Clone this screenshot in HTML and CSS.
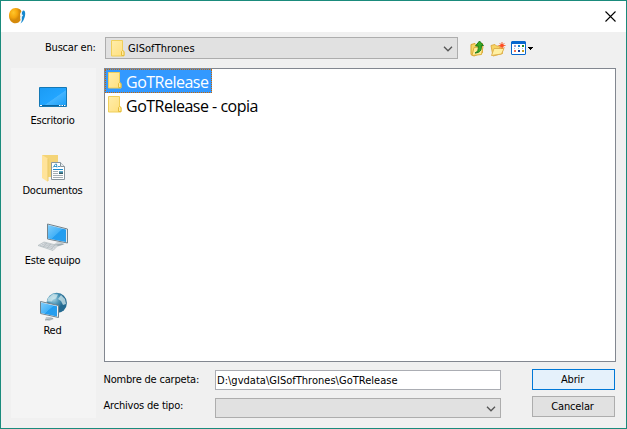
FILE: index.html
```html
<!DOCTYPE html>
<html lang="es">
<head>
<meta charset="utf-8">
<title>Abrir</title>
<link rel="stylesheet" href="styles.css">
</head>
<body>
<svg class="defs" width="0" height="0" aria-hidden="true">
  <defs>
    <linearGradient id="fold" x2="1" y2="1"><stop stop-color="#ffedaa"/><stop offset="1" stop-color="#ffdf7d"/></linearGradient>
    <linearGradient id="blue" x2="1" y2="1"><stop stop-color="#1b9bf4"/><stop offset=".55" stop-color="#22a5ff"/><stop offset=".57" stop-color="#43b4ff"/><stop offset="1" stop-color="#159cf7"/></linearGradient>
    <linearGradient id="screen" x2="1" y2="1"><stop stop-color="#80cdfb"/><stop offset=".5" stop-color="#43b1f7"/><stop offset=".52" stop-color="#229df0"/><stop offset="1" stop-color="#299eed"/></linearGradient>
    <radialGradient id="sun" cx=".35" cy=".3"><stop stop-color="#ffc62b"/><stop offset=".65" stop-color="#f5a60d"/><stop offset="1" stop-color="#d58a0b"/></radialGradient>
    <radialGradient id="globe" cx=".35" cy=".3"><stop stop-color="#a9d4e4"/><stop offset=".55" stop-color="#4e97b8"/><stop offset="1" stop-color="#246a91"/></radialGradient>
    <symbol id="folder" viewBox="0 0 14 18">
      <path d="M.5 1.5h11v10l1.5 1v4.5H.5z" fill="url(#fold)" stroke="#efcf5b"/>
      <path d="M10.5 16.5v-4l1-1 1.5 1v4z" fill="#ffe99d" stroke="#e6be3c"/>
    </symbol>
  </defs>
</svg>
<div class="window">
  <header class="titlebar">
    <svg class="logo" width="17" height="17" viewBox="0 0 17 17">
      <path d="M6.5 0C9.500 0 12 1.500 12.500 3.500 11 5 10.800 7 11.500 8.500c-.5 1-.3 2.500.2 3.500-1.200 2-3 3.300-5.200 3.300C2.800 15.300 0 12 0 7.700 0 3.300 2.800 0 6.500 0z" fill="url(#sun)"/>
      <path d="M14 2.500c1.800-.2 2.300 1.500 2.200 3.500-.2 4-2.200 8-4.700 9.500 1.200-2 1.600-3.500 1.200-5 0-1.300.4-2.300 1.300-3-1.500-1-1.500-4 0-5z" fill="#1688ce"/>
      <path d="M13 3.500c-1 1.200-.8 2.700 0 4-1 .9-1.300 2.200-1 3.700" fill="none" stroke="#d8eef8"/>
    </svg>
    <svg class="close" width="11" height="11" viewBox="0 0 11 11"><path d="M.5.5l10 10M10.500.5l-10 10" stroke="#000" stroke-width="1.100"/></svg>
  </header>
  <div class="toolbar">
    <span class="label look">Buscar en:</span>
    <div class="combo location">
      <svg width="14" height="18"><use href="#folder"/></svg>
      <span class="place">GISofThrones</span>
      <svg class="chevron" width="10" height="6" viewBox="0 0 10 6"><path d="M1 .8l4 4 4-4" fill="none" stroke="#555" stroke-width="1.300"/></svg>
    </div>
    <svg class="up" width="15" height="17" viewBox="0 0 15 17">
      <path d="M1 4.500l4-1 1 1 6.500-1v9L4 16 1 14.500z" fill="#f6d565" stroke="#d7a32d"/>
      <path d="M2 15.500l2-8 9-1-1.500 8z" fill="#ffeb96" stroke="#dcae3e"/>
      <path d="M5 13c3-1 3.500-3.500 3.200-7H5.500L9.500 1l4 4.500h-2.200C12 10 10 12.800 5 13z" fill="#36ab24" stroke="#16741a" stroke-width=".9"/>
    </svg>
    <svg class="new" width="16" height="15" viewBox="0 0 16 15">
      <path d="M1 3.500l4-1 1.500 1.500 6 .5v7L3 14z" fill="#f7d363" stroke="#dfae45"/>
      <path d="M1.500 13.500L4 6.500h10L11.500 12z" fill="#fff0a2" stroke="#dfb250"/>
      <path d="M12 0v7M8.500 3.500h7M9.700 1.200l4.600 4.600M14.300 1.200L9.700 5.800" stroke="#f46d3c" stroke-width="1"/>
      <circle cx="12" cy="3.500" r="1.700" fill="#ff4b24"/>
    </svg>
    <svg class="view" width="23" height="14" viewBox="0 0 23 14">
      <path d="M1 0h13l1 1v12l-1 1H1l-1-1V1z" fill="#0867ce"/><path d="M1 3h13v10H1z" fill="#fff"/>
      <path d="M3 4h2v2H3z" fill="#a69cca"/><path d="M7 4h2v2H7z" fill="#1982d2"/><path d="M11 4h2v2h-2z" fill="#218b28"/>
      <path d="M3 9h2v2H3z" fill="#f3704e"/><path d="M7 9h2v2H7z" fill="#153c9d"/><path d="M11 9h2v2h-2z" fill="#c49b22"/>
      <path d="M3 7.500h1M7 7.500h1M11 7.500h1" stroke="#a7c0dc"/>
      <path d="M17 6h5v1h-1v1h-1v1h-1V8h-1V7h-1z" fill="#000"/>
    </svg>
  </div>
  <div class="content">
    <nav class="places">
      <div class="shortcut">
        <svg width="34" height="34" viewBox="0 0 34 34">
          <path d="M3.500 7.500h27v19h-27z" fill="url(#blue)" stroke="#1478b5"/>
          <path d="M4 25.500h26" stroke="#0b639d"/><path d="M4 25.500h2M23 25.500h1.500M25.500 25.500h1.500M28 25.500h1.500" stroke="#fff"/>
        </svg>
        <span>Escritorio</span>
      </div>
      <div class="shortcut">
        <svg width="34" height="34" viewBox="0 0 34 34">
          <path d="M6 5h16v22H9z" fill="#f4d477"/>
          <path d="M6 5l6 3.500V32l-6-4z" fill="#ffe39a"/><path d="M12 8.500V31" stroke="#e9c966"/>
          <path d="M15.500 12.500h9l4 4v13h-13z" fill="#fff" stroke="#8a979e"/><path d="M24.500 12.500v4h4" fill="#e5eaed" stroke="#87939a"/>
          <path d="M17 17.500l2.500-3.500h1l.5 3.500M18 16.500h3M22 16.500h2" fill="none" stroke="#1884be" stroke-width=".8"/>
          <path d="M17 19.500h10" stroke="#1b8cd0"/>
          <path d="M17 21.500h5M17 23.500h5M17 25.500h10M17 27.500h10" stroke="#a6afb4"/><path d="M23 21h4v3h-4z" fill="#5eaccf"/><path d="M23 22.500h4V24h-4z" fill="#315b64"/>
        </svg>
        <span>Documentos</span>
      </div>
      <div class="shortcut">
        <svg width="34" height="34" viewBox="0 0 34 34">
          <path d="M17 25l4-3h4l4 2-7 2.500z" fill="#cbd2d6"/><path d="M18 25l8-1.500 2 1-6 1.500z" fill="#9eabb1"/>
          <path d="M11.500 4l20 5v14l-20-4z" fill="#e5e9ec" stroke="#73838c"/>
          <path d="M12 5l18 4.500v12.500l-18-3.600z" fill="url(#screen)"/>
          <path d="M2 25.500L8 22l14 3.500-5 5z" fill="#d9dee1" stroke="#a8b1b6" stroke-width=".6"/>
          <path d="M4 25.500l13 3M6 24.300l13 3M8 23.200l12 2.800M7 27l4-4M11 28l4-4M15 29l4-4" stroke="#aab3b9" stroke-width=".5"/>
        </svg>
        <span>Este equipo</span>
      </div>
      <div class="shortcut">
        <svg width="34" height="34" viewBox="0 0 34 34">
          <circle cx="20.700" cy="13" r="10.200" fill="url(#globe)"/>
          <path d="M12 8l5-4 5 .5-2 4-3 1-1 2-5 0zM25 5l4 4 1 5-3 1-2-4-3-2z" fill="#d3e9ee" opacity=".75"/>
          <path d="M10 27h5l3 2-5 2-4-1z" fill="#c0c9ce"/><path d="M9 30l8-1.500" stroke="#98a4aa"/>
          <path d="M4.500 11.500l18 4v12l-18-4z" fill="#edf2f4" stroke="#71828d"/>
          <path d="M5 12.500l16 3.700v10.300L5 23z" fill="url(#screen)"/>
        </svg>
        <span>Red</span>
      </div>
    </nav>
    <main class="files">
      <div class="file selected"><svg width="14" height="18"><use href="#folder"/></svg><span>GoTRelease</span></div>
      <div class="file"><svg width="14" height="18"><use href="#folder"/></svg><span>GoTRelease - copia</span></div>
    </main>
    <div class="form">
      <div class="fields">
        <span class="label">Nombre de carpeta:</span>
        <div class="field">D:\gvdata\GISofThrones\GoTRelease</div>
        <span class="label">Archivos de tipo:</span>
        <div class="combo"><svg class="chevron" width="10" height="6" viewBox="0 0 10 6"><path d="M1 .8l4 4 4-4" fill="none" stroke="#555" stroke-width="1.300"/></svg></div>
      </div>
      <div class="actions">
        <button class="primary">Abrir</button>
        <button>Cancelar</button>
      </div>
    </div>
  </div>
</div>
</body>
</html>
```

FILE: styles.css
```css
* { box-sizing: border-box; }
body { margin: 0; font: 11px/14px "DejaVu Sans Condensed", "DejaVu Sans", sans-serif; font-stretch: condensed; color: #000; }
svg { display: block; flex: none; }
.defs { position: absolute; }
.window { width: 627px; height: 429px; border: 1px solid #1a8b7c; background: #f0f0f0; }
.titlebar { height: 31px; background: #fff; display: flex; justify-content: space-between; padding: 7px 10px 0 8px; }
.close { margin-top: 3px; }
.toolbar { height: 36px; display: flex; align-items: flex-start; padding-top: 5px; }
.label { white-space: nowrap; letter-spacing: -.2px; }
.look { width: 60px; margin: 4px 0 0 44px; }
.combo { background: #e1e1e1; border: 1px solid #adadad; display: flex; align-items: center; }
.location { width: 353px; height: 22px; padding-left: 5px; }
.place { margin: 1px 0 0 3px; letter-spacing: .05px; }
.chevron { margin: 2px 4px 0 auto; }
.up { margin: 3px 0 0 12px; }
.new { margin: 5px 0 0 5px; }
.view { margin: 4px 0 0 5px; }
.content { display: grid; grid-template: 294px 56px / 85px 512px; column-gap: 8px; padding-left: 10px; }
.places { grid-row: span 2; background: #f4f4f4; padding-top: 12px; }
.shortcut { height: 70px; display: flex; flex-direction: column; align-items: center; text-align: center; }
.shortcut svg { margin-right: 1px; }
.shortcut span { margin: 0 0 0 -2px; white-space: nowrap; letter-spacing: -.25px; }
.files { background: #fff; border: 1px solid #828790; }
.file { width: max-content; height: 24px; display: flex; align-items: center; padding: 0 4px 0 3px; font: 16px/24px "Open Sans", sans-serif; letter-spacing: -.5px; white-space: nowrap; }
.file svg { margin-bottom: 2px; }
.file span { margin: 2px 0 0 4px; }
.selected { width: 107px; background: #3399ff; color: #fff; outline: 1px dotted #cc6600; outline-offset: -1px; }
.form { display: flex; justify-content: space-between; padding-right: 1px; }
.fields { display: grid; grid-template: 20px 20px / 111px 286px; row-gap: 8px; padding-top: 8px; }
.fields .label { padding-top: 3px; margin-left: -.5px; }
.fields .label:nth-child(3) { padding-top: 1px; }
.fields .combo { padding: 0; }
.field { background: #fff; border: 1px solid #abadb3; padding: 3px 1px; white-space: nowrap; letter-spacing: .02px; }
.actions { display: grid; grid-template: 21px 21px / 83px; row-gap: 6px; padding-top: 7px; }
button { border: 1px solid #adadad; background: #e1e1e1; padding: 0 2px 0 0; font: inherit; color: inherit; letter-spacing: -.15px; }
.primary { background: #e5f1fb; border-color: #0078d7; }
```
